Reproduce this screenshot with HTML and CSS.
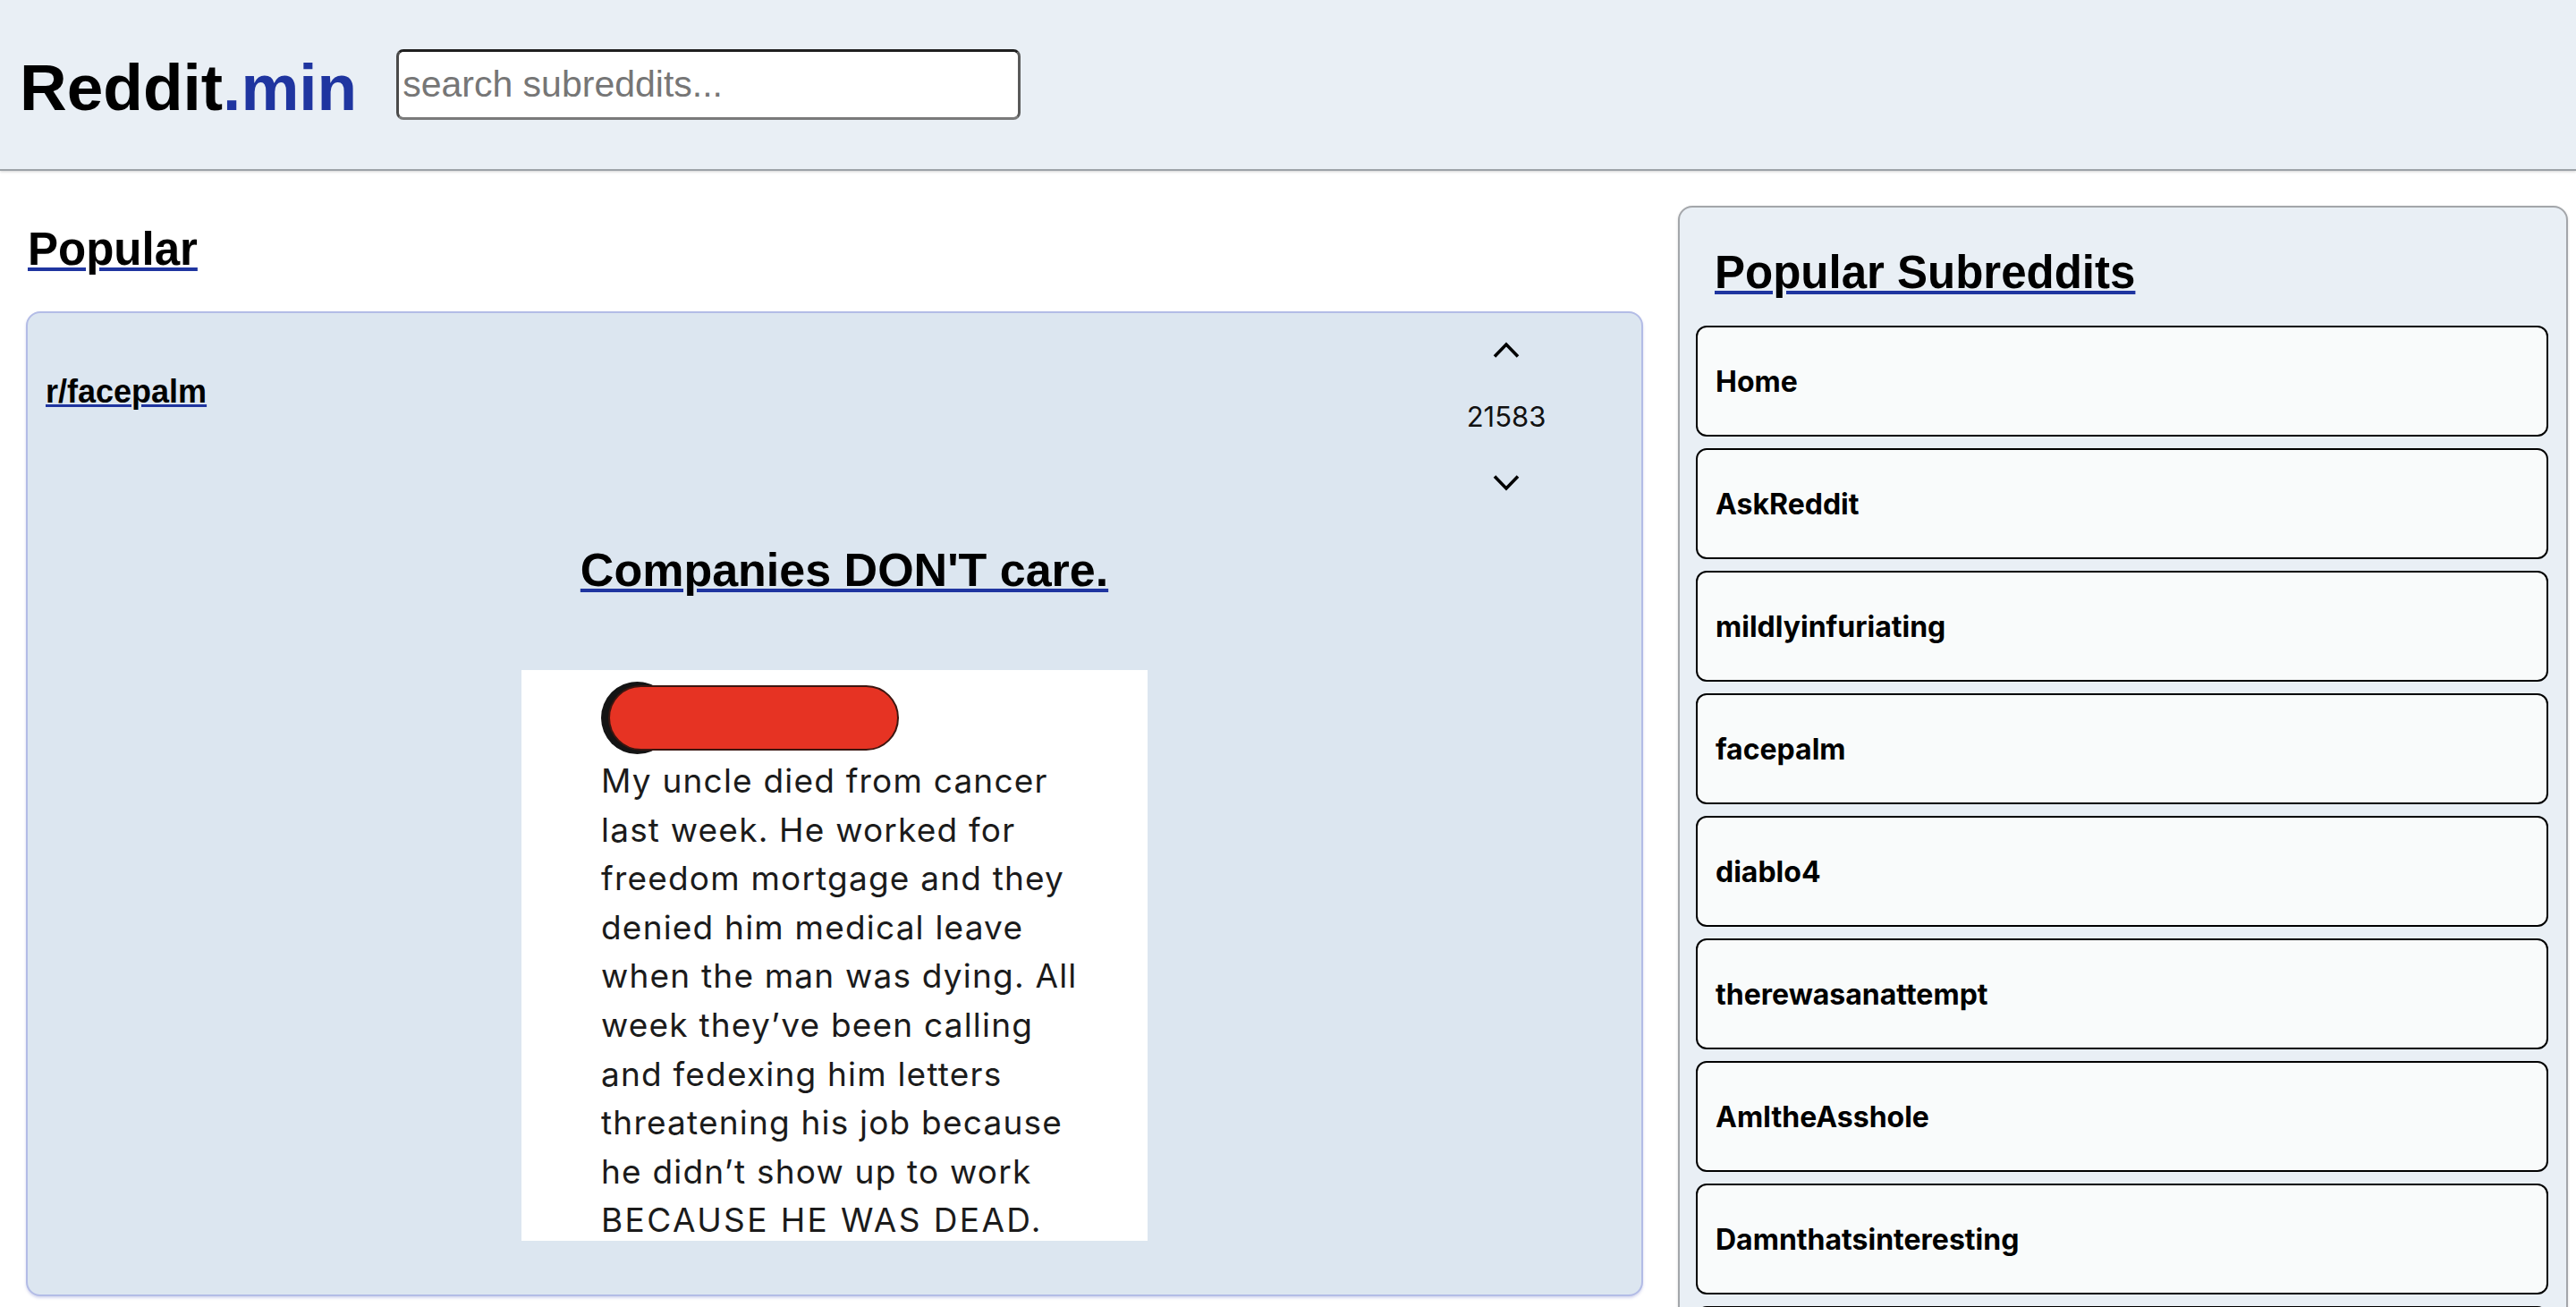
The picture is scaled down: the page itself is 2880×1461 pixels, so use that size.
FILE: index.html
```html
<!DOCTYPE html>
<html lang="en">
<head>
<meta charset="utf-8">
<title>Reddit.min</title>
<link rel="stylesheet" href="styles.css">
</head>
<body>
<header class="topbar">
  <a class="logo" href="#"><span class="logo-main">Reddit</span><span class="logo-accent">.min</span></a>
  <input class="search" type="text" placeholder="search subreddits...">
</header>
<main class="layout">
  <section class="feed">
    <h2 class="page-title"><a href="#">Popular</a></h2>
    <article class="post">
      <div class="post-head">
        <a class="sub-link" href="#">r/facepalm</a>
        <div class="votes">
          <button class="vote-btn" aria-label="upvote"><svg width="30" height="18" viewBox="0 0 30 18"><polyline points="2,16.5 15,3 28,16.5" fill="none" stroke="#000" stroke-width="3.6"/></svg></button>
          <span class="score">21583</span>
          <button class="vote-btn" aria-label="downvote"><svg width="30" height="18" viewBox="0 0 30 18"><polyline points="2,1.5 15,15 28,1.5" fill="none" stroke="#000" stroke-width="3.6"/></svg></button>
        </div>
      </div>
      <h2 class="post-title"><a href="#">Companies DON'T care.</a></h2>
      <div class="post-media">
        <div class="tweet">
          <div class="tweet-user"><span class="avatar"></span><span class="redact"></span></div>
          <p class="tweet-text"><span>My uncle died from cancer</span><span>last week. He worked for</span><span>freedom mortgage and they</span><span>denied him medical leave</span><span>when the man was dying. All</span><span>week they’ve been calling</span><span>and fedexing him letters</span><span>threatening his job because</span><span>he didn’t show up to work</span><span class="caps">BECAUSE HE WAS DEAD.</span></p>
        </div>
      </div>
    </article>
  </section>
  <aside class="sidebar">
    <h2 class="side-title"><a href="#">Popular Subreddits</a></h2>
    <ul class="sub-list">
      <li><button class="sub-item">Home</button></li>
      <li><button class="sub-item">AskReddit</button></li>
      <li><button class="sub-item">mildlyinfuriating</button></li>
      <li><button class="sub-item">facepalm</button></li>
      <li><button class="sub-item">diablo4</button></li>
      <li><button class="sub-item">therewasanattempt</button></li>
      <li><button class="sub-item">AmItheAsshole</button></li>
      <li><button class="sub-item">Damnthatsinteresting</button></li>
      <li><button class="sub-item">interestingasfuck</button></li>
      <li><button class="sub-item">pics</button></li>
    </ul>
  </aside>
</main>
</body>
</html>
```

FILE: styles.css
```css
* { box-sizing: border-box; }

html, body {
  margin: 0;
  padding: 0;
  background: #ffffff;
  font-family: "Liberation Sans", Arial, sans-serif;
  color: #000;
}

a {
  color: #000;
  text-decoration: underline;
  text-decoration-color: #1f35a0;
  text-decoration-thickness: 0.085em;
  text-underline-offset: 0.06em;
}

/* ---------- header ---------- */
.topbar {
  height: 191px;
  display: flex;
  align-items: center;
  padding: 0 0 0 22px;
  background: #e9eff5;
  border-bottom: 2px solid #9da3a8;
  box-shadow: 0 1px 3px rgba(0, 0, 0, 0.18);
}

.logo {
  font-size: 73px;
  font-weight: 700;
  text-decoration: none;
  margin-top: 6px;
}
.logo-main { color: #000; }
.logo-accent { color: #1f35a0; }

.search {
  margin-left: 44px;
  width: 698px;
  height: 79px;
  border: 3px solid;
  border-color: #1f1f1f #5a5a5a #7a7a7a #4a4a4a;
  border-radius: 8px;
  background: #fff;
  padding: 0 4px;
  font-family: "Liberation Sans", Arial, sans-serif;
  font-size: 41px;
  color: #222;
  outline: none;
}
.search::placeholder { color: #767676; }

/* ---------- layout ---------- */
.layout {
  display: flex;
  align-items: flex-start;
  gap: 39px;
  padding: 0 9px 0 29px;
}

.feed {
  flex: 1;
  min-width: 0;
}

.page-title {
  margin: 58px 0 0 2px;
  font-size: 51px;
  font-weight: 700;
  line-height: normal;
}

/* ---------- post ---------- */
.post {
  margin-top: 40px;
  background: #dce6f0;
  border: 2px solid #b3bce6;
  border-radius: 16px;
  box-shadow: 0 2px 3px rgba(90, 100, 190, 0.25);
  padding: 20px;
  display: flex;
  flex-direction: column;
}

.post-head {
  display: flex;
  justify-content: space-between;
  align-items: flex-start;
}

.sub-link {
  margin-top: 47px;
  font-size: 36px;
  font-weight: 700;
  line-height: normal;
}

.votes {
  width: 262px;
  display: flex;
  flex-direction: column;
  align-items: center;
}

.vote-btn {
  display: block;
  border: 0;
  padding: 0;
  margin: 0;
  background: transparent;
  width: 30px;
  height: 18px;
  cursor: pointer;
}
.vote-btn svg { display: block; }
.votes .vote-btn:first-child { margin-top: 12px; }

.score {
  display: block;
  margin: 46px 0 45px;
  font-family: Inter, "Noto Sans", sans-serif;
  font-size: 31px;
  line-height: 40px;
  color: #111;
}

.post-title {
  margin: 58px 0 0;
  padding-left: 22px;
  text-align: center;
  font-size: 52px;
  font-weight: 700;
  line-height: normal;
}

.post-media {
  margin: 82px auto 40px;
  width: 700px;
  height: 638px;
  background: #fff;
  overflow: hidden;
}

.tweet {
  padding: 13px 0 0 89px;
}

.tweet-user {
  display: flex;
  align-items: center;
}

.avatar {
  width: 81px;
  height: 81px;
  border-radius: 50%;
  background: #141414;
  flex: none;
}

.redact {
  margin-left: -73px;
  width: 325px;
  height: 73px;
  border-radius: 37px;
  background: #e63323;
  border: 2px solid #3c1610;
  flex: none;
}

.tweet-text {
  margin: 3px 0 0;
  font-family: Inter, "Noto Sans", sans-serif;
  font-size: 37px;
  line-height: 54.6px;
  color: #1b1b1b;
  letter-spacing: 1.2px;
}
.tweet-text span { display: block; white-space: nowrap; }
.tweet-text .caps { letter-spacing: 2.4px; }

/* ---------- sidebar ---------- */
.sidebar {
  flex: none;
  width: 995px;
  margin-top: 39px;
  background: #e9eff5;
  border: 2px solid #a3a6aa;
  border-radius: 16px;
  box-shadow: 0 1px 3px rgba(0, 0, 0, 0.15);
  padding: 43px 20px 20px 18px;
}

.side-title {
  margin: 0 0 30px 21px;
  font-size: 51px;
  font-weight: 700;
  line-height: normal;
}

.sub-list {
  list-style: none;
  margin: 0;
  padding: 0;
  display: flex;
  flex-direction: column;
  gap: 13px;
}

.sub-item {
  display: flex;
  align-items: center;
  width: 953px;
  height: 124px;
  padding: 0 20px;
  background: #f9fbfb;
  border: 2px solid #000;
  border-radius: 12px;
  font-family: Inter, "Noto Sans", sans-serif;
  font-size: 32px;
  font-weight: 700;
  color: #000;
  text-align: left;
  cursor: pointer;
}
```
